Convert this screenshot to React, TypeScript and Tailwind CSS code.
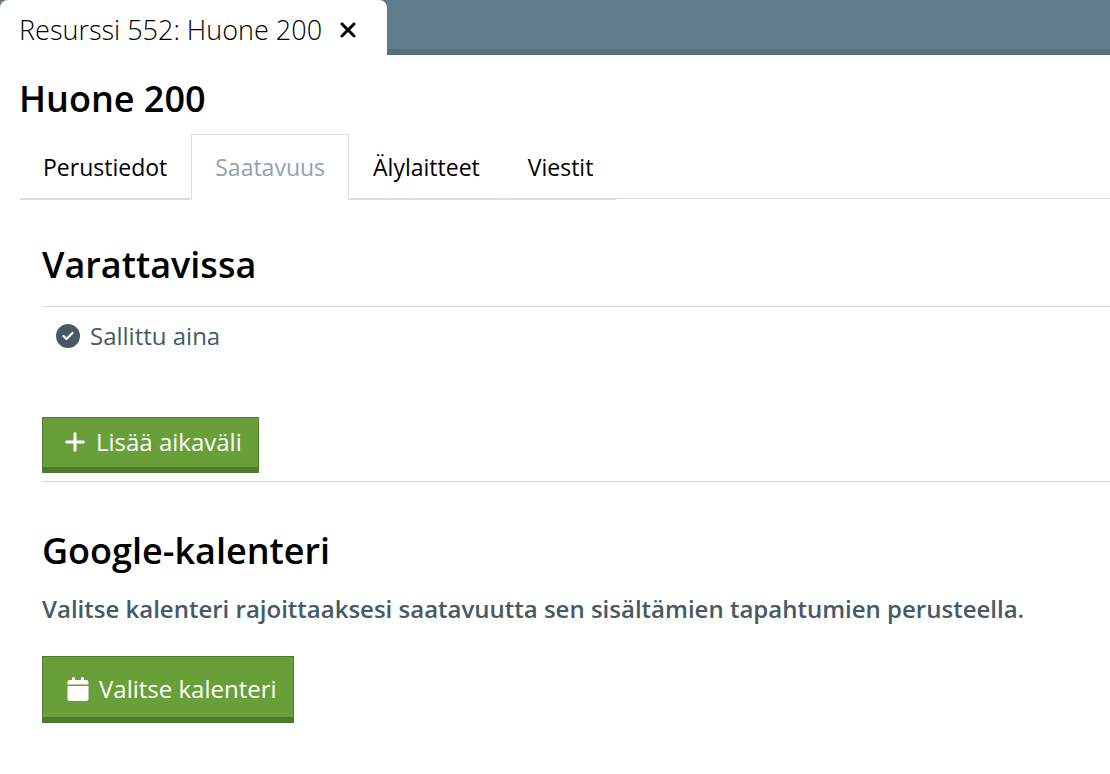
import { useState } from "react";
import { FaCalendar, FaCircleCheck, FaPlus, FaXmark } from "react-icons/fa6";

const tabs = ["Perustiedot", "Saatavuus", "Älylaitteet", "Viestit"];

export default function App() {
  const [activeTab, setActiveTab] = useState("Saatavuus");

  return (
    <div className="min-h-screen bg-white font-['Open_Sans','Noto_Sans',sans-serif] text-black">
      {/* Window tabs */}
      <header className="flex bg-[#607d8b]">
        <div className="flex h-[55px] items-center gap-[14px] rounded-t-lg bg-white pl-[19px] pr-[27px] pt-1">
          <span className="text-[27px] font-light leading-8">Resurssi 552: Huone 200</span>
          <button aria-label="Sulje" className="cursor-pointer">
            <FaXmark className="size-6" />
          </button>
        </div>
        <div className="flex-1 border-b-6 border-[#546e7a]"></div>
      </header>

      <main className="pl-[19px]">
        <h1 className="pt-6 text-4xl font-semibold">Huone 200</h1>

        {/* Resource sections */}
        <nav className="mt-[15px] flex border-b border-[#dddddd]">
          {tabs.map((tab) => (
            <button
              key={tab}
              onClick={() => setActiveTab(tab)}
              className={`-mb-[2px] h-[66px] cursor-pointer border px-[23px] text-[23px] ${
                activeTab === tab
                  ? "border-[#dddddd] border-b-white bg-white text-[#90a4ae]"
                  : "border-transparent border-b-[#dddddd]"
              }`}
            >
              {tab}
            </button>
          ))}
        </nav>

        <div className="pl-[23px]">
          <section className="border-b border-[#cfd8dc] pb-2 pt-[46px]">
            <h2 className="text-4xl font-semibold">Varattavissa</h2>
            <div className="mt-[21px] flex items-center gap-[10px] border-t border-[#dddddd] pl-[14px] pt-[13px] text-2xl text-[#455a64]">
              <FaCircleCheck className="size-6" />
              <span>Sallittu aina</span>
            </div>
            <button className="mt-[65px] flex h-14 cursor-pointer items-center gap-[9px] border border-b-6 border-[#4f7a2c] bg-[#689f38] pb-[2px] pl-5 pr-4 text-2xl text-white">
              <FaPlus className="size-6" />
              Lisää aikaväli
            </button>
          </section>

          <section className="pt-[49px]">
            <h2 className="text-4xl font-semibold">Google-kalenteri</h2>
            <p className="mt-[22px] text-2xl font-semibold text-[#455a64]">
              Valitse kalenteri rajoittaaksesi saatavuutta sen sisältämien tapahtumien perusteella.
            </p>
            <button className="mt-[31px] flex h-[67px] cursor-pointer items-center gap-[9px] border border-b-6 border-[#4f7a2c] bg-[#689f38] pl-[23px] pr-4 pt-1 text-2xl text-white">
              <FaCalendar className="size-6" />
              Valitse kalenteri
            </button>
          </section>
        </div>
      </main>
    </div>
  );
}
